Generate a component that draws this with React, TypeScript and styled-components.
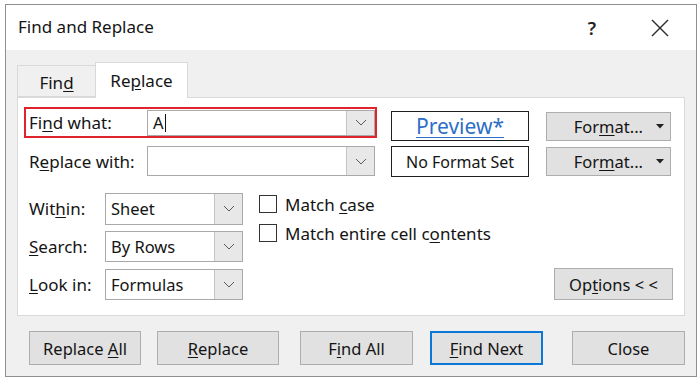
import React from 'react';
import styled, { createGlobalStyle } from 'styled-components';

const GlobalStyle = createGlobalStyle`
  html, body {
    margin: 0;
    padding: 0;
    background: #ffffff;
  }
  body {
    font-family: "Noto Sans", "Open Sans", sans-serif;
    font-size: 16px;
    color: #141414;
  }
`;

const Window = styled.div`
  margin: 4px 0 0 5px;
  width: 692px;
  height: 373px;
  box-sizing: border-box;
  border: 1px solid #8e8e8e;
  background: #f0f0f0;
  display: flex;
  flex-direction: column;
`;

const TitleBar = styled.div`
  height: 45px;
  background: #ffffff;
  display: flex;
  align-items: center;
  padding: 0 13px 0 12px;
`;

const Title = styled.div`
  flex: 1;
  font-size: 17px;
  margin-top: -2px;
`;

const TitleButton = styled.div<{ $ml?: number }>`
  width: 46px;
  height: 45px;
  margin-left: ${(p) => p.$ml ?? 0}px;
  display: flex;
  align-items: center;
  justify-content: center;
  font-size: 18px;
  font-weight: 600;
  color: #222;
`;

const Body = styled.div`
  flex: 1;
  padding: 12px 11px 0 11px;
  display: flex;
  flex-direction: column;
`;

const TabRow = styled.div`
  display: flex;
  align-items: flex-end;
  height: 35px;
`;

const Tab = styled.div<{ $active?: boolean }>`
  box-sizing: border-box;
  height: ${(p) => (p.$active ? '36px' : '32px')};
  width: ${(p) => (p.$active ? '93px' : '78px')};
  background: ${(p) => (p.$active ? '#ffffff' : '#f0f0f0')};
  border: 1px solid #d9d9d9;
  border-bottom: ${(p) => (p.$active ? 'none' : '1px solid #d9d9d9')};
  border-right: ${(p) => (p.$active ? '1px solid #d9d9d9' : 'none')};
  margin-bottom: ${(p) => (p.$active ? '-1px' : '0')};
  position: relative;
  z-index: 1;
  display: flex;
  align-items: center;
  justify-content: center;
  padding-top: ${(p) => (p.$active ? '0' : '2px')};
  font-size: 17px;
`;

const Panel = styled.div`
  box-sizing: border-box;
  height: 219px;
  background: #ffffff;
  border: 1px solid #d9d9d9;
  padding: 9px 11px 0 6px;
  display: flex;
  flex-direction: column;
`;

const Key = styled.span`
  text-decoration: underline;
  text-underline-offset: 2px;
`;

const TopSection = styled.div`
  display: flex;
  align-items: flex-start;
`;

const FieldColumn = styled.div`
  width: 353px;
  display: flex;
  flex-direction: column;
  gap: 8px;
`;

const FieldRow = styled.div<{ $highlight?: boolean }>`
  box-sizing: border-box;
  height: ${(p) => (p.$highlight ? '31px' : '30px')};
  display: flex;
  align-items: center;
  border: ${(p) => (p.$highlight ? '2px solid #e0242b' : 'none')};
  padding-left: ${(p) => (p.$highlight ? '3px' : '5px')};
`;

const FieldLabel = styled.div<{ $w: number }>`
  width: ${(p) => p.$w}px;
  flex-shrink: 0;
  font-size: 17px;
`;

const Combo = styled.div<{ $w: number; $h: number }>`
  box-sizing: border-box;
  width: ${(p) => p.$w}px;
  height: ${(p) => p.$h}px;
  border: 1px solid #a9a9a9;
  background: #ffffff;
  display: flex;
  align-items: stretch;
`;

const ComboText = styled.div`
  flex: 1;
  display: flex;
  align-items: center;
  padding-left: 5px;
  font-size: 16.5px;
`;

const Caret = styled.span`
  display: inline-block;
  width: 1px;
  height: 18px;
  background: #111;
  margin-left: 1px;
`;

const ArrowBox = styled.div`
  width: 27px;
  border-left: 1px solid #c4c4c4;
  background: #e8e8e8;
  display: flex;
  align-items: center;
  justify-content: center;
`;

const MidColumn = styled.div`
  margin-left: 14px;
  width: 138px;
  display: flex;
  flex-direction: column;
  padding-top: 4px;
  gap: 5px;
`;

const FormatBox = styled.div<{ $h: number }>`
  box-sizing: border-box;
  height: ${(p) => p.$h}px;
  border: 1.5px solid #1f1f1f;
  display: flex;
  align-items: center;
  justify-content: center;
  font-size: 16px;
`;

const PreviewText = styled.span`
  color: #2d6fc6;
  font-size: 21px;
  text-decoration: underline;
  text-decoration-thickness: 1px;
  text-underline-offset: 3px;
`;

const RightColumn = styled.div`
  margin-left: 17px;
  width: 125px;
  display: flex;
  flex-direction: column;
  padding-top: 5px;
  gap: 6px;
`;

const Button = styled.div<{ $w: number; $h?: number; $ml?: number; $default?: boolean }>`
  box-sizing: border-box;
  width: ${(p) => p.$w}px;
  height: ${(p) => p.$h ?? 34}px;
  margin-left: ${(p) => p.$ml ?? 0}px;
  background: #e1e1e1;
  border: ${(p) => (p.$default ? '2px solid #0a78d4' : '1px solid #adadad')};
  display: flex;
  align-items: center;
  justify-content: center;
  font-size: 16.5px;
  flex-shrink: 0;
`;

const DropButton = styled(Button)`
  justify-content: flex-end;
  padding-right: 6px;
  gap: 13px;
`;

const LowerSection = styled.div`
  margin-top: 16px;
  display: flex;
  align-items: flex-start;
  flex: 1;
`;

const OptionGrid = styled.div`
  display: grid;
  grid-template-columns: 76px 138px;
  grid-auto-rows: 31px;
  row-gap: 7px;
  align-items: center;
  padding-left: 5px;
  font-size: 17px;
`;

const CheckList = styled.div`
  margin-left: 16px;
  padding-top: 2px;
  display: flex;
  flex-direction: column;
  gap: 11px;
`;

const CheckRow = styled.label`
  display: flex;
  align-items: center;
  gap: 8px;
  font-size: 17px;
  height: 18px;
`;

const CheckBox = styled.span`
  box-sizing: border-box;
  width: 18px;
  height: 18px;
  border: 1px solid #333333;
  background: #ffffff;
`;

const Spacer = styled.div`
  flex: 1;
`;

const OptionsSlot = styled.div`
  flex-shrink: 0;
  padding-top: 75px;
`;

const ButtonRow = styled.div`
  margin-top: 15px;
  display: flex;
`;

function Chevron() {
  return (
    <svg width="12" height="7" viewBox="0 0 12 7">
      <polyline points="1,1 6,6 11,1" fill="none" stroke="#5a5a5a" strokeWidth="1" />
    </svg>
  );
}

function SmallTriangle() {
  return (
    <svg width="8" height="5" viewBox="0 0 8 5">
      <polygon points="0,0 8,0 4,4.5" fill="#222" />
    </svg>
  );
}

function CloseIcon() {
  return (
    <svg width="18" height="18" viewBox="0 0 18 18">
      <path d="M1 1 L17 17 M17 1 L1 17" stroke="#2a2a2a" strokeWidth="1.4" fill="none" />
    </svg>
  );
}

function ComboBox({ value, w, h, caret }: { value?: string; w: number; h: number; caret?: boolean }) {
  return (
    <Combo $w={w} $h={h}>
      <ComboText>
        {value}
        {caret && <Caret />}
      </ComboText>
      <ArrowBox>
        <Chevron />
      </ArrowBox>
    </Combo>
  );
}

export default function App() {
  return (
    <>
      <GlobalStyle />
      <Window>
        <TitleBar>
          <Title>Find and Replace</Title>
          <TitleButton>?</TitleButton>
          <TitleButton $ml={22}>
            <CloseIcon />
          </TitleButton>
        </TitleBar>
        <Body>
          <TabRow>
            <Tab>
              <span>
                Fin<Key>d</Key>
              </span>
            </Tab>
            <Tab $active>
              <span>
                Re<Key>p</Key>lace
              </span>
            </Tab>
          </TabRow>
          <Panel>
            <TopSection>
              <FieldColumn>
                <FieldRow $highlight>
                  <FieldLabel $w={118}>
                    Fi<Key>n</Key>d what:
                  </FieldLabel>
                  <ComboBox value="A" w={228} h={26} caret />
                </FieldRow>
                <FieldRow>
                  <FieldLabel $w={118}>
                    R<Key>e</Key>place with:
                  </FieldLabel>
                  <ComboBox w={228} h={30} />
                </FieldRow>
              </FieldColumn>
              <MidColumn>
                <FormatBox $h={30}>
                  <PreviewText>Preview*</PreviewText>
                </FormatBox>
                <FormatBox $h={31}>No Format Set</FormatBox>
              </MidColumn>
              <RightColumn>
                <DropButton $w={125} $h={29}>
                  <span>
                    For<Key>m</Key>at...
                  </span>
                  <SmallTriangle />
                </DropButton>
                <DropButton $w={125} $h={29}>
                  <span>
                    For<Key>m</Key>at...
                  </span>
                  <SmallTriangle />
                </DropButton>
              </RightColumn>
            </TopSection>
            <LowerSection>
              <OptionGrid>
                <span>
                  Wit<Key>h</Key>in:
                </span>
                <ComboBox value="Sheet" w={138} h={32} />
                <span>
                  <Key>S</Key>earch:
                </span>
                <ComboBox value="By Rows" w={138} h={31} />
                <span>
                  <Key>L</Key>ook in:
                </span>
                <ComboBox value="Formulas" w={138} h={31} />
              </OptionGrid>
              <CheckList>
                <CheckRow>
                  <CheckBox />
                  <span>
                    Match <Key>c</Key>ase
                  </span>
                </CheckRow>
                <CheckRow>
                  <CheckBox />
                  <span>
                    Match entire cell c<Key>o</Key>ntents
                  </span>
                </CheckRow>
              </CheckList>
              <Spacer />
              <OptionsSlot>
                <Button $w={119} $h={32}>
                  <span>
                    Op<Key>t</Key>ions &lt; &lt;
                  </span>
                </Button>
              </OptionsSlot>
            </LowerSection>
          </Panel>
          <ButtonRow>
            <Button $w={112} $ml={12}>
              <span>
                Replace <Key>A</Key>ll
              </span>
            </Button>
            <Button $w={122} $ml={16}>
              <span>
                <Key>R</Key>eplace
              </span>
            </Button>
            <Button $w={113} $ml={21}>
              <span>
                F<Key>i</Key>nd All
              </span>
            </Button>
            <Button $w={113} $ml={17} $default>
              <span>
                <Key>F</Key>ind Next
              </span>
            </Button>
            <Button $w={113} $ml={29}>
              <span>Close</span>
            </Button>
          </ButtonRow>
        </Body>
      </Window>
    </>
  );
}
